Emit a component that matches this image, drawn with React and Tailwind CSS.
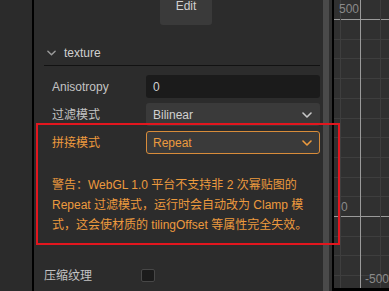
import React from "react";

const font = { fontFamily: '"Liberation Sans", "Noto Sans CJK SC", sans-serif' };

function Chevron({ color = "#bdbdbd", className = "" }) {
  return (
    <svg width="10" height="6" viewBox="0 0 10 6" className={className}>
      <path d="M1 1 L5 5 L9 1" fill="none" stroke={color} strokeWidth="1.6" strokeLinecap="round" strokeLinejoin="round" />
    </svg>
  );
}

function Canvas() {
  const hs = [];
  for (let k = -1; k < 15; k++) hs.push(19 + 19.7 * k);
  const vs = [6, 26, 46];
  return (
    <div className="relative flex-1 bg-[#303030] overflow-hidden">
      <svg width="55" height="291" className="absolute left-0 top-0">
        {hs.map((y, i) => (
          <line key={"h" + i} x1="0" x2="55" y1={Math.round(y) + 0.5} y2={Math.round(y) + 0.5} stroke={i === 1 || i === 11 ? "#9a9a9a" : "#3e3e3e"} strokeWidth="1" />
        ))}
        {vs.map((x, i) => (
          <line key={"v" + i} x1={x + 0.5} x2={x + 0.5} y1="0" y2="291" stroke={x === 26 ? "#9a9a9a" : "#3e3e3e"} strokeWidth="1" />
        ))}
      </svg>
      <div className="absolute left-[5px] top-[2px] text-[12px] leading-[14px] text-[#8a8a8a]">500</div>
      <div className="absolute left-[7px] top-[200px] text-[12px] leading-[14px] text-[#8a8a8a]">0</div>
      <div className="absolute left-[31px] top-[272px] text-[12px] leading-[14px] text-[#8a8a8a]">-500</div>
      <div className="absolute left-0 bottom-0 w-full h-[3px] bg-black" />
    </div>
  );
}

export default function App() {
  return (
    <div className="relative flex w-[389px] h-[291px] overflow-hidden bg-[#2c2c2c]" style={font}>
      <div className="w-[32px] bg-[#2b2b2b]" />
      <div className="w-[2px] bg-black" />
      <div className="w-[289px] bg-[#2c2c2c] flex flex-col text-[12px] text-[#c4c4c4]">
        <div className="ml-[126px] w-[52px] h-[25px] bg-[#3a3a3a] rounded-b-[3px] flex justify-center">
          <span className="-mt-[1px] leading-[14px] text-[#d0d0d0]">Edit</span>
        </div>
        <div className="mt-[15px] ml-[10px] mr-[3px] h-[26px] border-b border-[#121212] flex items-center pl-[3px]">
          <Chevron color="#9a9a9a" className="w-[9px]" />
          <span className="ml-[8px] leading-[14px] text-[#d0d0d0]">texture</span>
        </div>
        <div className="mt-[9px] pl-[18px] mr-[3px] flex flex-col gap-[5px]">
          <div className="flex items-center h-[23px]">
            <span className="w-[94px]">Anisotropy</span>
            <div className="flex-1 h-full bg-[#1b1b1b] rounded-[3px] flex items-center pl-[7px] text-[#d0d0d0]">0</div>
          </div>
          <div className="flex items-center h-[23px]">
            <span className="w-[94px]">过滤模式</span>
            <div className="flex-1 h-full bg-[#3a3a3a] rounded-[3px] flex items-center justify-between pl-[7px] pr-[8px] text-[#d0d0d0]">
              <span>Bilinear</span>
              <Chevron color="#c8c8c8" />
            </div>
          </div>
          <div className="flex items-center h-[23px] text-[#ec9a3e]">
            <span className="w-[94px]">拼接模式</span>
            <div className="flex-1 h-full bg-[#3a3a3a] border border-[#d88c3a] rounded-[3px] flex items-center justify-between pl-[6px] pr-[7px]">
              <span>Repeat</span>
              <Chevron color="#ec9a3e" />
            </div>
          </div>
        </div>
        <div className="mt-[21px] ml-[18px] w-[268px] leading-[20px] text-[#ec9a3e] whitespace-nowrap flex flex-col">
          <span>警告：WebGL 1.0 平台不支持非 2 次幂贴图的</span>
          <span>Repeat 过滤模式，运行时会自动改为 Clamp 模</span>
          <span>式，这会使材质的 tilingOffset 等属性完全失效。</span>
        </div>
        <div className="mt-[29px] pl-[10px] h-[23px] flex items-center">
          <span className="w-[97px]">压缩纹理</span>
          <div className="w-[14px] h-[13px] bg-[#1b1b1b] border border-[#474747] rounded-[2px]" />
        </div>
      </div>
      <div className="w-[6px] bg-[#4a4a4a]" />
      <div className="w-[3px] bg-[#2f2f2f]" />
      <div className="w-[2px] bg-black" />
      <Canvas />
      <div className="absolute left-[36px] top-[123px] w-[304px] h-[122px] border-2 border-[#e3161e] pointer-events-none" />
    </div>
  );
}
